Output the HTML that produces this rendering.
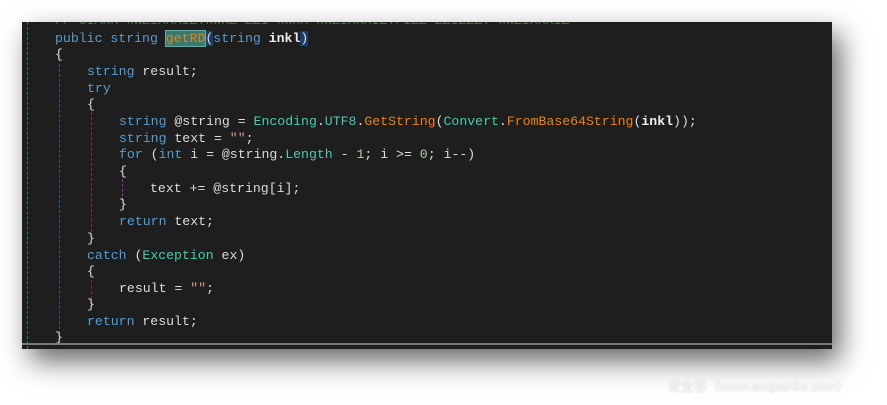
<!DOCTYPE html>
<html><head><meta charset="utf-8"><style>
html,body{margin:0;padding:0;width:887px;height:405px;background:#fff;overflow:hidden;position:relative}
#panel{position:absolute;left:22px;top:22px;width:810px;height:327px;background:#1e1e1e;box-shadow:8px 12px 26px rgba(0,0,0,.6);overflow:hidden}
#bar{position:absolute;left:0;bottom:4px;width:100%;height:2px;background:#7a7a7a}
.l{position:absolute;left:0;white-space:pre;font-family:"Liberation Mono",monospace;font-size:13.2px;line-height:16px;color:#dcdcdc}
.k{color:#569cd6}.t{color:#4ec9b0}.m{color:#e8821e}.b{font-weight:bold;color:#eee}.n{color:#b5cea8}.s{color:#d69d85}
.hl{background:#3a7a6a;outline:1px solid #6aa}.br{background:#1c3d6a}
.g{position:absolute;width:0;border-left:1px dashed}
#wm{position:absolute;left:668px;top:376px;font-family:"Liberation Sans","Noto Sans CJK SC",sans-serif;font-size:13px;color:#f4f4f4;text-shadow:0 0 2px #ccc}
</style></head><body>
<div id="panel">
<div class="g" style="left:5px;top:0;height:327px;border-color:#2e7a4a"></div>
<div class="g" style="left:37px;top:32px;height:290px;border-color:#2a5a80"></div>
<div class="g" style="left:69px;top:90px;height:125px;border-color:#8a3030"></div>
<div class="g" style="left:69px;top:258px;height:25px;border-color:#8a3030"></div>
<div class="g" style="left:100px;top:157px;height:22px;border-color:#8a30a0"></div>
<div class="l" style="top:-9px;left:33px;color:#57a64a;opacity:.6">// UIARK kwZIXKXIZ:kwKZ ZZI kwKK kwZIXKXIZ.PIZZ ZZIZZZ: kwZIXKXIZ</div>
<div class="l" style="top:9px;left:33px"><span class="k">public string </span><span class="m hl">getRD</span><span class="br">(</span><span class="k">string </span><span class="b">inkl</span><span class="br">)</span></div>
<div class="l" style="top:25px;left:33px">{</div>
<div class="l" style="top:42px;left:65px"><span class="k">string</span> result;</div>
<div class="l" style="top:59px;left:65px"><span class="k">try</span></div>
<div class="l" style="top:75px;left:65px">{</div>
<div class="l" style="top:92px;left:97px"><span class="k">string</span> @string = <span class="t">Encoding</span>.<span class="t">UTF8</span>.<span class="m">GetString</span>(<span class="t">Convert</span>.<span class="m">FromBase64String</span>(<span class="b">inkl</span>));</div>
<div class="l" style="top:109px;left:97px"><span class="k">string</span> text = <span class="s">""</span>;</div>
<div class="l" style="top:125px;left:97px"><span class="k">for</span> (<span class="k">int</span> i = @string.<span class="t">Length</span> - <span class="n">1</span>; i &gt;= <span class="n">0</span>; i--)</div>
<div class="l" style="top:142px;left:97px">{</div>
<div class="l" style="top:159px;left:128px">text += @string[i];</div>
<div class="l" style="top:175px;left:97px">}</div>
<div class="l" style="top:192px;left:97px"><span class="k">return</span> text;</div>
<div class="l" style="top:209px;left:65px">}</div>
<div class="l" style="top:226px;left:65px"><span class="k">catch</span> (<span class="t">Exception</span> ex)</div>
<div class="l" style="top:242px;left:65px">{</div>
<div class="l" style="top:259px;left:97px">result = <span class="s">""</span>;</div>
<div class="l" style="top:275px;left:65px">}</div>
<div class="l" style="top:292px;left:65px"><span class="k">return</span> result;</div>
<div class="l" style="top:308px;left:33px">}</div>
<div id="bar"></div>
</div>
<div id="wm">安全客（www.anquanke.com）</div>
</body></html>
